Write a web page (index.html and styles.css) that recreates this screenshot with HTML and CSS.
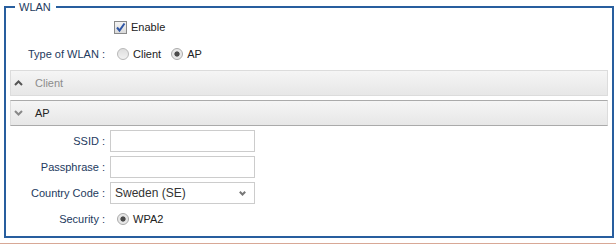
FILE: index.html
```html
<!DOCTYPE html>
<html>
<head>
<meta charset="utf-8">
<link rel="stylesheet" href="styles.css">
</head>
<body>
<div class="page">
  <fieldset class="wlan">
    <legend>WLAN</legend>
    <div class="top">
      <div class="row">
        <span class="lbl"></span>
        <label class="check">
          <span class="cbox"><svg width="11" height="11" viewBox="0 0 11 11"><path d="M2 5.5 L4.5 8.5 L9.5 1.5" fill="none" stroke="#2f56a6" stroke-width="2"/></svg></span>
          Enable
        </label>
      </div>
      <div class="row">
        <span class="lbl">Type of WLAN :</span>
        <label class="opt"><span class="radio"></span>Client</label>
        <label class="opt"><span class="radio on"></span>AP</label>
      </div>
    </div>
    <div class="accordion">
      <div class="acc-head inactive">
        <svg class="chev" width="9" height="6" viewBox="0 0 9 6"><path d="M1 5 L4.5 1.5 L8 5" fill="none" stroke="#555" stroke-width="2"/></svg>
        <span>Client</span>
      </div>
      <div class="acc-head active">
        <svg class="chev" width="9" height="6" viewBox="0 0 9 6"><path d="M1 1 L4.5 4.5 L8 1" fill="none" stroke="#888" stroke-width="2"/></svg>
        <span>AP</span>
      </div>
      <div class="acc-body">
        <div class="frow">
          <span class="lbl">SSID :</span>
          <input class="field" type="text">
        </div>
        <div class="frow">
          <span class="lbl">Passphrase :</span>
          <input class="field" type="password">
        </div>
        <div class="frow">
          <span class="lbl">Country Code :</span>
          <span class="select-wrap">
            <select class="select"><option>Sweden (SE)</option></select>
            <svg class="sel-chev" width="7" height="5" viewBox="0 0 7 5"><path d="M0.8 0.8 L3.5 3.5 L6.2 0.8" fill="none" stroke="#777" stroke-width="2"/></svg>
          </span>
        </div>
        <div class="frow">
          <span class="lbl">Security :</span>
          <label class="opt"><span class="radio on"></span>WPA2</label>
        </div>
      </div>
    </div>
  </fieldset>
</div>
<div class="rule"></div>
</body>
</html>
```
FILE: styles.css
```css
* { box-sizing: border-box; }

body {
  margin: 0;
  font-family: "Liberation Sans", Arial, sans-serif;
  font-size: 11px;
  color: #233a5e;
  background: #fff;
}

.page {
  padding: 0 2px 0 4px;
}

.wlan {
  margin: 0;
  min-width: 0;
  padding: 0 4px 6px;
  border: 2px solid #285e9e;
}

.wlan legend {
  margin-left: 5px;
  padding: 0 5px 0 4px;
  line-height: 14px;
  font-size: 11px;
  color: #233a5e;
}

.top {
  display: flex;
  flex-direction: column;
  gap: 3px;
  padding-top: 1px;
}

.row {
  display: flex;
  align-items: center;
  height: 24px;
}

.lbl {
  width: 100px;
  flex: none;
  padding-right: 5px;
  text-align: right;
  white-space: nowrap;
}

.check {
  display: flex;
  align-items: center;
  color: #222;
}

.cbox {
  width: 13px;
  height: 13px;
  margin: 0 4px 0 4px;
  border: 1px solid #8a8a8a;
  background: linear-gradient(#f4f4f4, #dadada);
  display: flex;
  align-items: center;
  justify-content: center;
}

.opt {
  display: flex;
  align-items: center;
  margin-right: 3px;
  color: #222;
}

.radio {
  width: 12px;
  height: 12px;
  margin: 0 4px 0 7px;
  border: 1px solid #b8b8b8;
  border-radius: 50%;
  background: linear-gradient(#dedede, #f2f2f2);
}

.radio.on {
  background: radial-gradient(circle, #4a4a4a 0, #4a4a4a 2.2px, #e4e4e4 3px, #ececec 6px);
  border-color: #aaa;
}

.accordion {
  margin-top: 4px;
}

.acc-head {
  display: flex;
  align-items: center;
  height: 26px;
  padding-left: 3px;
  border: 1px solid #dcdcdc;
  background: linear-gradient(#f5f5f5, #e7e7e7);
}

.acc-head .chev {
  flex: none;
  margin-right: 12px;
}

.acc-head.inactive {
  margin-bottom: 4px;
  color: #8c8c8c;
}

.acc-head.active {
  border-top-color: #aaa;
  border-bottom-color: #aaa;
  color: #222;
}

.acc-body {
  padding-top: 4px;
  display: flex;
  flex-direction: column;
  gap: 4px;
}

.frow {
  display: flex;
  align-items: center;
  height: 22px;
}

.field {
  width: 145px;
  height: 22px;
  margin: 0;
  padding: 0 4px;
  border: 1px solid #ccc;
  border-radius: 0;
  background: #fff;
  font-family: "Liberation Sans", Arial, sans-serif;
  font-size: 12px;
  color: #333;
}

.select-wrap {
  position: relative;
  width: 145px;
  height: 22px;
}

.select {
  width: 100%;
  height: 100%;
  margin: 0;
  padding: 0 4px;
  border: 1px solid #ccc;
  border-radius: 0;
  background: #fff;
  appearance: none;
  -webkit-appearance: none;
  font-family: "Liberation Sans", Arial, sans-serif;
  font-size: 12px;
  color: #333;
}

.sel-chev {
  position: absolute;
  right: 9px;
  top: 9px;
  pointer-events: none;
}

.rule {
  margin-top: 5px;
  border-top: 1px solid #d8a896;
}
```
